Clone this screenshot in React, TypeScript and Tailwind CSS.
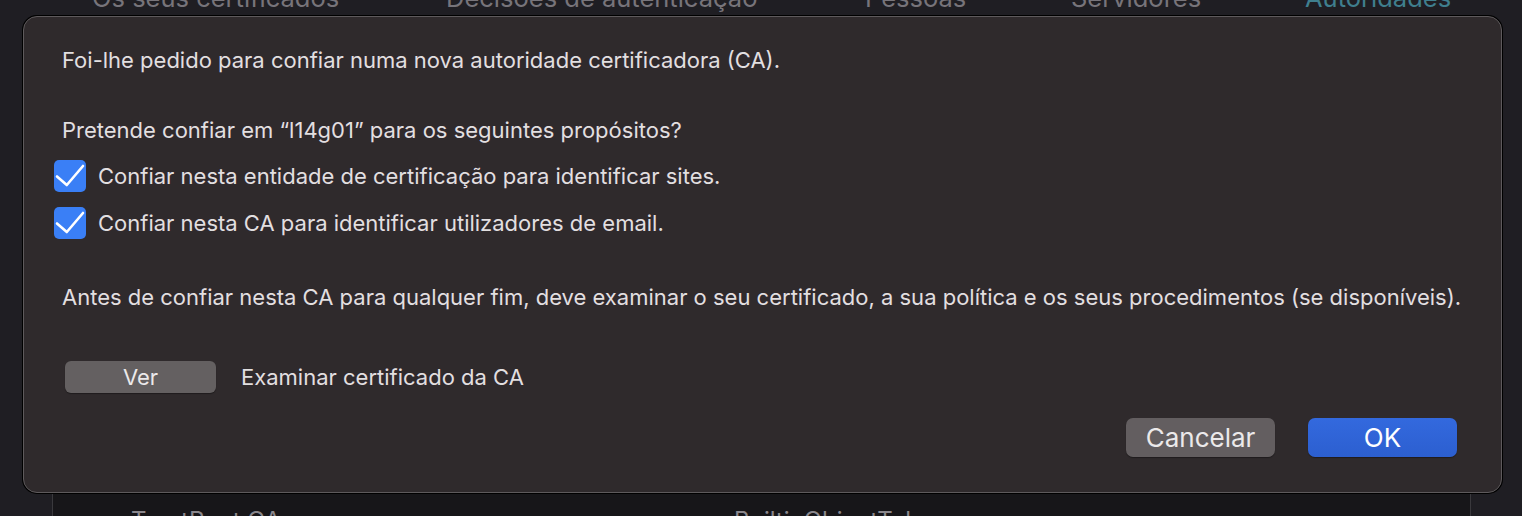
const tabs = [
  { label: 'Os seus certificados', active: false },
  { label: 'Decisões de autenticação', active: false },
  { label: 'Pessoas', active: false },
  { label: 'Servidores', active: false },
  { label: 'Autoridades', active: true },
];

const purposes = [
  'Confiar nesta entidade de certificação para identificar sites.',
  'Confiar nesta CA para identificar utilizadores de email.',
];

function Checkbox() {
  return (
    <span className="flex h-[32px] w-[32px] shrink-0 items-center justify-center rounded-[5px] bg-[#3a7ff6]">
      <svg viewBox="0 0 32 32" className="h-[32px] w-[32px]" fill="none">
        <path
          d="M3 16.5 L12.8 25 L29 6"
          stroke="white"
          strokeWidth="2.6"
          strokeLinecap="round"
          strokeLinejoin="round"
        />
      </svg>
    </span>
  );
}

export default function App() {
  return (
    <div
      className="relative h-[516px] w-[1522px] overflow-hidden bg-[#1f1e23] text-[#e2dfe0]"
      style={{ fontFamily: 'Inter, "Liberation Sans", sans-serif' }}
    >
      {/* window behind the sheet */}
      <div className="-mt-[17px] flex pl-[92px] text-[25.5px] leading-[30px] text-[#77747a]">
        <span className="w-[354px]">{tabs[0].label}</span>
        <span className="w-[419px]">{tabs[1].label}</span>
        <span className="w-[206px]">{tabs[2].label}</span>
        <span className="w-[234px]">{tabs[3].label}</span>
        <span className="text-[#3f7f8e]">{tabs[4].label}</span>
      </div>
      <div className="ml-[52px] mr-[51px] mt-[13px] h-[520px] border-l border-r border-[#3a393d] bg-[#171619]">
        <div className="flex pl-[78px] pt-[480px] text-[24px] leading-[30px] text-[#8a878c]">
          <span className="w-[603px]">TrustRoot CA</span>
          <span>BuiltinObjectTokens</span>
        </div>
      </div>

      {/* sheet */}
      <div className="absolute left-[23px] top-[16px] w-[1479px] rounded-[14px] border border-[#5e5a5c] bg-[#2f2a2c] pb-[35px] pl-[38px] pr-[44px] pt-[30px] shadow-[0_0_0_1px_#000]">
        <p className="text-[22px] leading-[26px]">
          Foi-lhe pedido para confiar numa nova autoridade certificadora (CA).
        </p>
        <p className="mt-[44px] text-[22px] leading-[26px]">
          Pretende confiar em “l14g01” para os seguintes propósitos?
        </p>
        <div className="-ml-[8px] mt-[17px] flex flex-col gap-[15px]">
          {purposes.map((p) => (
            <label key={p} className="flex items-center gap-[12px] text-[22px] leading-[26px]">
              <Checkbox />
              <span>{p}</span>
            </label>
          ))}
        </div>
        <p className="mt-[45px] whitespace-nowrap text-[22px] leading-[26px]">
          Antes de confiar nesta CA para qualquer fim, deve examinar o seu certificado, a sua política e os seus procedimentos (se disponíveis).
        </p>
        <div className="ml-[3px] mt-[51px] flex items-center gap-[25px]">
          <button className="h-[32px] w-[151px] rounded-[6px] bg-[#646061] text-[22px] text-[#ebe9ea] shadow-[0_1px_1px_rgba(0,0,0,0.35)]">
            Ver
          </button>
          <span className="text-[22px] leading-[26px]">Examinar certificado da CA</span>
        </div>
        <div className="mt-[25px] flex justify-end gap-[33px]">
          <button className="h-[39px] w-[149px] rounded-[7px] bg-[#635e60] text-[26px] text-[#ebe9ea] shadow-[0_1px_1px_rgba(0,0,0,0.35)]">
            Cancelar
          </button>
          <button className="h-[39px] w-[149px] rounded-[7px] bg-gradient-to-b from-[#3369de] to-[#2c5fd0] text-[26px] text-white shadow-[0_1px_1px_rgba(0,0,0,0.35)]">
            OK
          </button>
        </div>
      </div>
    </div>
  );
}
